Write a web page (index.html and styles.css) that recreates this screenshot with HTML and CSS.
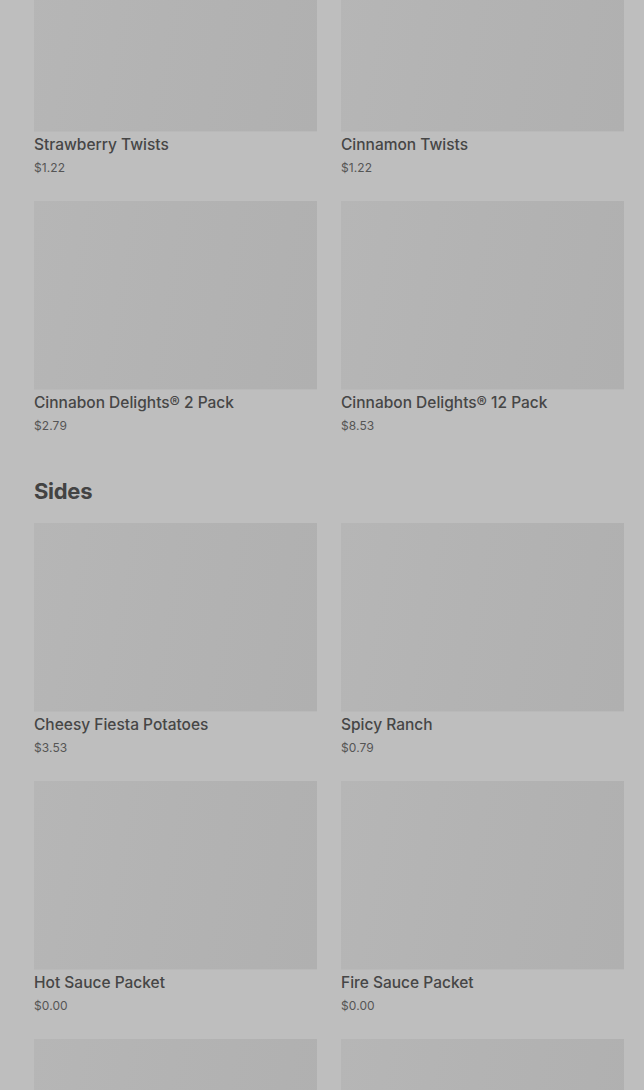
FILE: index.html
```html
<!DOCTYPE html>
<html lang="en">
  <head>
    <meta charset="UTF-8" />
    <meta name="viewport" content="width=device-width, initial-scale=1.0" />
    <title>Menu</title>
    <link rel="stylesheet" href="styles.css">
  </head>
  <body>
    <main class="menu">
      <!-- Sweets (scrolled part way) -->
      <section class="section section-scrolled">
        <div class="grid">
          <div class="card">
            <div class="thumb"></div>
            <h3 class="card-name">Strawberry Twists</h3>
            <p class="card-price">$1.22</p>
          </div>
          <div class="card">
            <div class="thumb"></div>
            <h3 class="card-name">Cinnamon Twists</h3>
            <p class="card-price">$1.22</p>
          </div>
          <div class="card">
            <div class="thumb"></div>
            <h3 class="card-name">Cinnabon Delights® 2 Pack</h3>
            <p class="card-price">$2.79</p>
          </div>
          <div class="card">
            <div class="thumb"></div>
            <h3 class="card-name">Cinnabon Delights® 12 Pack</h3>
            <p class="card-price">$8.53</p>
          </div>
        </div>
      </section>

      <section class="section">
        <h2 class="section-title">Sides</h2>
        <div class="grid">
          <div class="card">
            <div class="thumb"></div>
            <h3 class="card-name">Cheesy Fiesta Potatoes</h3>
            <p class="card-price">$3.53</p>
          </div>
          <div class="card">
            <div class="thumb"></div>
            <h3 class="card-name">Spicy Ranch</h3>
            <p class="card-price">$0.79</p>
          </div>
          <div class="card">
            <div class="thumb"></div>
            <h3 class="card-name">Hot Sauce Packet</h3>
            <p class="card-price">$0.00</p>
          </div>
          <div class="card">
            <div class="thumb"></div>
            <h3 class="card-name">Fire Sauce Packet</h3>
            <p class="card-price">$0.00</p>
          </div>
          <!-- next row, only the tops of the pictures are in view -->
          <div class="card">
            <div class="thumb"></div>
          </div>
          <div class="card">
            <div class="thumb"></div>
          </div>
        </div>
      </section>
    </main>

    <div class="backdrop"></div>
  </body>
</html>
```

FILE: styles.css
```css
/* page under a dimmed modal backdrop */

body {
  margin: 0;
  font-family: Inter, "Noto Sans", sans-serif;
  background-color: #bebebe;
  color: #474747;
  overflow: hidden;
  height: 1090px;
}

.menu {
  padding: 0 20px 0 34px;
}

.section-scrolled {
  margin-top: -57px;
}

.section-title {
  margin: 40px 0 16px;
  font-size: 22px;
  line-height: 32px;
  font-weight: 700;
  color: #434343;
  letter-spacing: -0.3px;
}

.grid {
  display: grid;
  grid-template-columns: 1fr 1fr;
  column-gap: 24px;
  row-gap: 24px;
}

.card {
  display: flex;
  flex-direction: column;
}

.thumb {
  height: 188px;
  background: linear-gradient(100deg, #b6b6b6 0%, #b3b3b3 45%, #b0b0b0 100%);
  box-shadow: 0 1px 0 #b9b9b9;
}

.card-name {
  margin: 4px 0 0;
  font-size: 15.5px;
  line-height: 20px;
  font-weight: 500;
  color: #464646;
}

.card-price {
  margin: 4px 0 0;
  font-size: 12px;
  line-height: 18px;
  font-weight: 400;
  color: #555;
  letter-spacing: 0.1px;
}

.backdrop {
  position: fixed;
  inset: 0;
  pointer-events: none;
}
```
